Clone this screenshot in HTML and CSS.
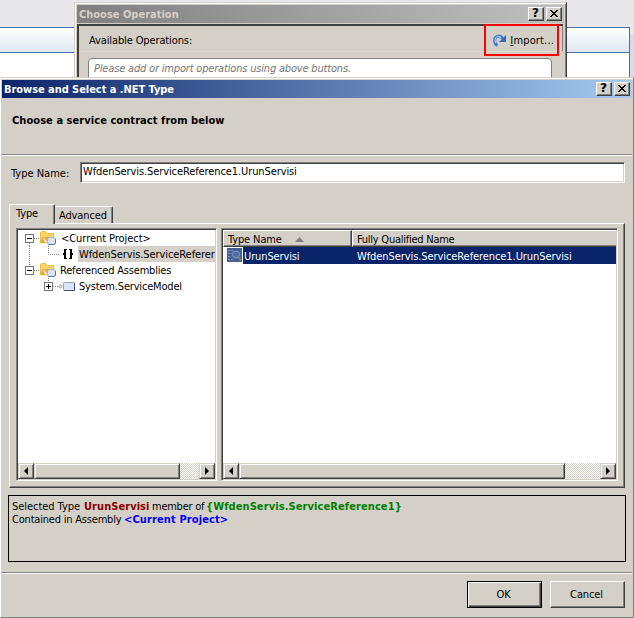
FILE: index.html
```html
<!DOCTYPE html>
<html lang="en">
<head>
<meta charset="utf-8">
<title>Browse and Select a .NET Type</title>
<link rel="stylesheet" href="styles.css">
</head>
<body>
<div class="desktop">
  <div class="designer"><div class="designer-head"></div></div>

  <section class="window operation">
    <header class="titlebar inactive">
      <b>Choose Operation</b>
      <button class="cap">?</button>
      <button class="cap"><svg width="8" height="7" viewBox="0 0 8 7"><use href="#close"/></svg></button>
    </header>
    <div class="op-body">
      <div class="op-tools">
        <span>Available Operations:</span>
        <span class="import">
          <svg width="13" height="13" viewBox="0 0 13 13"><path d="M4.500 11.500C.8 9.500.8 4.200 3.800 2.700c2.200-1.100 4.500-.3 6 2" fill="none" stroke="#3d77d2" stroke-width="3"/><path d="M2.800 9C1.500 6.500 2 3.600 4 2.700c1.500-.6 2.800-.2 4 1" fill="none" stroke="#a8cbf6" stroke-width="1.200"/><path d="M13 1v7H6z" fill="#3168c8"/></svg>
          <span><u>I</u>mport...</span>
        </span>
      </div>
      <div class="op-list"><i>Please add or import operations using above buttons.</i></div>
    </div>
    <div class="callout"></div>
  </section>

  <section class="window browse">
    <header class="titlebar">
      <b>Browse and Select a .NET Type</b>
      <button class="cap">?</button>
      <button class="cap"><svg width="8" height="7" viewBox="0 0 8 7"><use href="#close"/></svg></button>
    </header>
    <div class="heading"><b>Choose a service contract from below</b></div>
    <div class="name-row">
      <label>Type Name:</label>
      <div class="field">WfdenServis.ServiceReference1.UrunServisi</div>
    </div>
    <div class="tabs">
      <div class="tab active">Type</div>
      <div class="tab">Advanced</div>
    </div>
    <div class="panel">
      <div class="pane tree">
        <ul class="nodes">
          <li class="node">
            <svg class="lead" width="38" height="16" viewBox="0 0 38 16"><use href="#minus"/><use href="#folder"/><path d="M11.500 13V16" class="dots"/></svg>
            <span class="proj">&lt;Current Project&gt;</span>
          </li>
          <li class="node">
            <svg class="lead" width="60" height="16" viewBox="0 0 60 16"><path d="M11.500 0V16M30.500 0V8.500H42" class="dots"/><path d="M46 3h3v1h-1v8h1v1h-3V9h-1V7h1zM54 3h-3v1h1v8h-1v1h3V9h1V7h-1z"/></svg>
            <span class="chosen">WfdenServis.ServiceReferer</span>
          </li>
          <li class="node">
            <svg class="lead" width="38" height="16" viewBox="0 0 38 16"><path d="M11.500 0V4" class="dots"/><use href="#minus"/><use href="#folder"/><path d="M30.500 14V16" class="dots"/></svg>
            <span class="assemblies">Referenced Assemblies</span>
          </li>
          <li class="node">
            <svg class="lead" width="60" height="16" viewBox="0 0 60 16"><path d="M30.500 0V4M35 8.500h6" class="dots"/><rect x="26.500" y="4.500" width="8" height="8" fill="#fff" stroke="#777"/><path d="M28 8.500h5M30.500 6v5" stroke="#000"/><circle cx="42.500" cy="8.500" r="1.500" fill="#fff" stroke="#8995aa"/><rect x="45.500" y="4.500" width="11" height="8" rx="1" fill="#dce6fa" stroke="#8fa0c4"/><path d="M46 12.500h10.500V5" fill="none" stroke="#40506e"/></svg>
            <span class="model">System.ServiceModel</span>
          </li>
        </ul>
        <div class="scroll"><i class="arrow left"></i><i class="thumb tree-thumb"></i><i class="track"></i><i class="arrow right"></i></div>
      </div>
      <div class="pane list">
        <div class="columns">
          <div class="col first"><span>Type Name</span><svg width="9" height="5" viewBox="0 0 9 5"><path d="M4.500 0L9 5H0z" fill="#808080"/></svg></div>
          <div class="col rest"><span>Fully Qualified Name</span></div>
        </div>
        <div class="record">
          <svg width="15" height="16" viewBox="0 0 15 16"><path fill="#426296" d="M0 1h15v14H0z"/><path d="M1 3.500h5M1 6.500h4M1 9.500h3M1 12.500h5" stroke="#8c98b0" stroke-dasharray="2 1"/><circle cx="9" cy="7.500" r="3.500" fill="#4d6fa7" stroke="#829bbf"/><path d="M11.500 10.500l2.500 3" stroke="#8b776c" stroke-width="2"/></svg>
          <div class="cells"><span class="cell-a">UrunServisi</span><span class="cell-b">WfdenServis.ServiceReference1.UrunServisi</span></div>
        </div>
        <div class="scroll"><i class="arrow left"></i><i class="thumb list-thumb"></i><i class="track"></i><i class="arrow right"></i></div>
      </div>
    </div>
    <div class="summary">
      <p><span class="w-sel">Selected Type</span><b class="red w-urun">UrunServisi</b><span class="w-mem">member of</span><b class="green">{WfdenServis.ServiceReference1}</b></p>
      <p><span class="w-cont">Contained in Assembly</span><b class="blue">&lt;Current Project&gt;</b></p>
    </div>
    <footer class="actions">
      <button class="push default">OK</button>
      <button class="push">Cancel</button>
    </footer>
  </section>
</div>
<svg class="symbols" width="0" height="0">
  <defs>
    <path id="close" d="M0 0h2v1h1v1h2V1h1V0h2v1H7v1H6v1H5v1h1v1h1v1h1v1H6V6H5V5H3v1H2v1H0V6h1V5h1V4h1V3H2V2H1V1H0z"/>
    <g id="minus"><path d="M16 8.500h6" class="dots"/><rect x="7.500" y="4.500" width="8" height="8" fill="#fff" stroke="#777"/><path d="M9 8.500h5" stroke="#000"/></g>
    <g id="folder"><path d="M22.500 12.500v-10l1-1h4l1.500 2h6.500v9z" fill="#fbd465" stroke="#ecbd4c"/><path d="M22 13l3-6h10v6z" fill="#eda832"/><path d="M26 8.500l1.500 3h2" stroke="#fff" stroke-width="1.500" fill="none"/><rect x="29.500" y="7.500" width="8" height="7" rx="2" fill="#dae5f8" stroke="#9fb0d0"/><path d="M30.500 14.500h5.500l1.500-1.500V9" fill="none" stroke="#5f7194"/></g>
  </defs>
</svg>
</body>
</html>
```
FILE: styles.css
```css
* { box-sizing: border-box; }
body {
  margin: 0;
  overflow: hidden;
  font: 11px/13px "DejaVu Sans Condensed", "DejaVu Sans", sans-serif;
  font-stretch: condensed;
  letter-spacing: -0.12px;
  color: #000;
}
p, ul { margin: 0; padding: 0; list-style: none; }
b { letter-spacing: 0.06px; }
span, b, label { white-space: nowrap; }
.symbols { position: absolute; }
.dots { stroke: #888; stroke-dasharray: 1 1; fill: none; }
.desktop { position: relative; width: 634px; height: 618px; background: #e8e8eb; overflow: hidden; }

.designer {
  position: absolute; left: 0; top: 27px; width: 630px; height: 51px;
  border: solid #4c70ad; border-width: 1px 1px 0 0; background: #fff;
  box-shadow: 4px 7px 0 #d5dcec;
}
.designer-head { height: 25px; border-bottom: 1px solid #4c70ad; background: linear-gradient(#fff, #dfe8f3); }

.window { position: absolute; background: #d4d0c8; }
.operation {
  left: 74px; top: 2px; width: 493px; height: 80px; padding: 1px 1px 0 2px;
  border: 1px solid #d4d0c8; border-right: 1px solid #404040;
  box-shadow: inset 1px 1px #fff, inset -1px 0 #808080;
}
.titlebar {
  display: flex; align-items: center; height: 18px; padding: 0 2px;
  color: #fff; background: linear-gradient(90deg, #0a246a, #a6caf0);
}
.titlebar b { margin-right: auto; letter-spacing: -0.05px; }
.titlebar.inactive { width: 487px; margin-top: 1px; color: #d4d0c8; background: linear-gradient(90deg, #808080, #c0c0c0); }
.titlebar.inactive b { letter-spacing: 0; }
.cap {
  display: flex; align-items: center; justify-content: center;
  width: 16px; height: 14px; padding: 0 1px 1px 0; margin-left: 2px;
  border: 1px solid; border-color: #fff #404040 #404040 #fff;
  box-shadow: inset -1px -1px #808080; background: #d4d0c8;
  font: bold 12px/11px "DejaVu Sans", sans-serif; color: #000;
}
.cap svg { flex: none; }
.op-body { height: 54px; width: 486px; margin-top: 1px; border: solid #404040; border-width: 2px 0 0 2px; }
.op-tools {
  display: flex; align-items: center; justify-content: space-between;
  width: 482px; height: 26px; margin-left: 2px; padding: 3px 8px 0 8px;
  border-bottom: 1px solid #dedbd5; border-right: 1px solid #808080;
}
.import { display: flex; gap: 4px; align-items: center; letter-spacing: 0.15px; }
.op-list {
  width: 464px; height: 30px; margin: 6px 0 0 9px; padding: 3px 5px;
  border: 1px solid #808080; border-radius: 4px 4px 0 0; background: #fff;
  color: #777; letter-spacing: -0.18px;
}
.callout { position: absolute; left: 409px; top: 21px; width: 75px; height: 32px; border: 2px solid #f00; }

.browse {
  left: 0; top: 77px; width: 634px; height: 541px; padding: 2px 1px 0;
  border: 1px solid; border-color: #d4d0c8 #808080 #808080 #fff;
  box-shadow: inset 0 1px #fff;
}
.heading {
  height: 58px; padding: 16px 0 0 10px;
  border-bottom: 1px solid #fff; box-shadow: inset 0 -1px #808080;
}
.name-row { display: flex; height: 48px; padding: 6px 7px 0 9px; }
.name-row label { width: 69px; padding-top: 5px; letter-spacing: 0; }
.field {
  flex: 1; height: 21px; padding: 2px; background: #fff; letter-spacing: -0.1px;
  border: 1px solid; border-color: #808080 #fff #fff #808080;
  box-shadow: inset 1px 1px #404040, inset -1px -1px #d4d0c8;
}
.tabs { display: flex; align-items: flex-end; height: 19px; padding-left: 7px; }
.tab {
  height: 17px; padding: 2px 5px 0 4px; width: 58px;
  border: solid; border-width: 1px 1px 0 0; border-color: #fff #404040;
  box-shadow: inset -1px 0 #808080; border-radius: 2px 2px 0 0;
}
.tab.active {
  z-index: 1; width: 46px; height: 20px; margin-bottom: -1px; padding: 2px 0 0 6px;
  border-left: 1px solid #fff; background: #d4d0c8;
}
.panel {
  display: flex; gap: 4px; width: 616px; height: 265px; margin-left: 7px; padding: 4px 6px;
  border: 1px solid; border-color: #fff #404040 #404040 #fff;
  box-shadow: inset -1px -1px #808080;
}
.pane {
  display: flex; flex-direction: column; height: 253px; padding: 1px; background: #fff;
  border: 1px solid; border-color: #808080 #fff #fff #808080;
  box-shadow: inset 1px 1px #404040, inset -1px -1px #d4d0c8;
}
.tree { width: 201px; }
.list { flex: 1; }
.nodes { flex: 1; overflow: hidden; letter-spacing: -0.18px; }
.node { display: flex; align-items: center; height: 16px; }
.lead { flex: none; }
.proj { margin-left: 5px; letter-spacing: -0.05px; }
.assemblies { margin-left: 4px; }
.chosen { flex: 1; height: 16px; padding: 2px 0 0 1px; background: #d4d0c8; letter-spacing: -0.08px; }
.model { padding-left: 1px; }
.scroll { display: flex; height: 16px; background: #d4d0c8; flex: none; margin-top: auto; }
.arrow, .thumb {
  display: flex; align-items: center; justify-content: center;
  border: 1px solid; border-color: #d4d0c8 #404040 #404040 #d4d0c8;
  box-shadow: inset 1px 1px #fff, inset -1px -1px #808080;
}
.arrow { flex: none; width: 16px; padding-right: 1px; }
.arrow::before { content: ""; border: solid transparent; border-width: 4px 0; }
.arrow.left::before { border-right: 4px solid #000; }
.arrow.right::before { border-left: 4px solid #000; }
.tree-thumb { width: 146px; }
.list-thumb { width: 326px; }
.track { flex: 1; background: repeating-conic-gradient(#fff 0 25%, #d4d0c8 0 50%) 0 0 / 2px 2px; }
.columns { display: flex; height: 17px; }
.col {
  display: flex; align-items: center; padding-top: 1px; background: #d4d0c8;
  border: 1px solid; border-color: #fff #404040 #404040 #fff;
  box-shadow: inset -1px -1px #808080;
}
.first { width: 129px; padding-left: 4px; gap: 13px; }
.rest { flex: 1; padding-left: 4px; border-right: 0; box-shadow: inset 0 -1px #808080; letter-spacing: -0.25px; }
.record { display: flex; height: 17px; padding-left: 4px; }
.cells {
  display: flex; align-items: center; flex: 1; margin-left: 1px; padding: 1px 0 0 1px; color: #fff;
  background: #0a246a;
}
.cell-a { width: 113px; }
.cell-b { letter-spacing: -0.08px; }
.summary {
  width: 618px; height: 67px; margin: 7px 0 0 6px; padding: 4px 3px;
  border: 1px solid #000;
}
.summary p { display: flex; }
.w-sel { width: 72px; letter-spacing: -0.05px; }
.w-urun { width: 68px; }
.w-mem { width: 54px; letter-spacing: -0.25px; }
.w-cont { width: 112px; letter-spacing: -0.2px; }
.red { color: #8b0000; }
.green { color: #008000; letter-spacing: 0.09px; }
.blue { color: #00f; letter-spacing: 0.12px; }
.actions {
  display: flex; justify-content: flex-end; gap: 8px; height: 45px; margin-top: 10px; padding: 8px 7px 0 0;
  border-top: 1px solid #808080; box-shadow: inset 0 1px #fff;
}
.push {
  width: 75px; height: 27px; padding: 0 2px 0 0; background: #d4d0c8;
  border: 1px solid; border-color: #fff #404040 #404040 #fff;
  box-shadow: inset -1px -1px #808080; font: inherit; letter-spacing: inherit; color: #000;
}
.push.default { border-color: #000; box-shadow: inset 1px 1px #fff, inset -1px -1px #404040, inset -2px -2px #808080; }
```
